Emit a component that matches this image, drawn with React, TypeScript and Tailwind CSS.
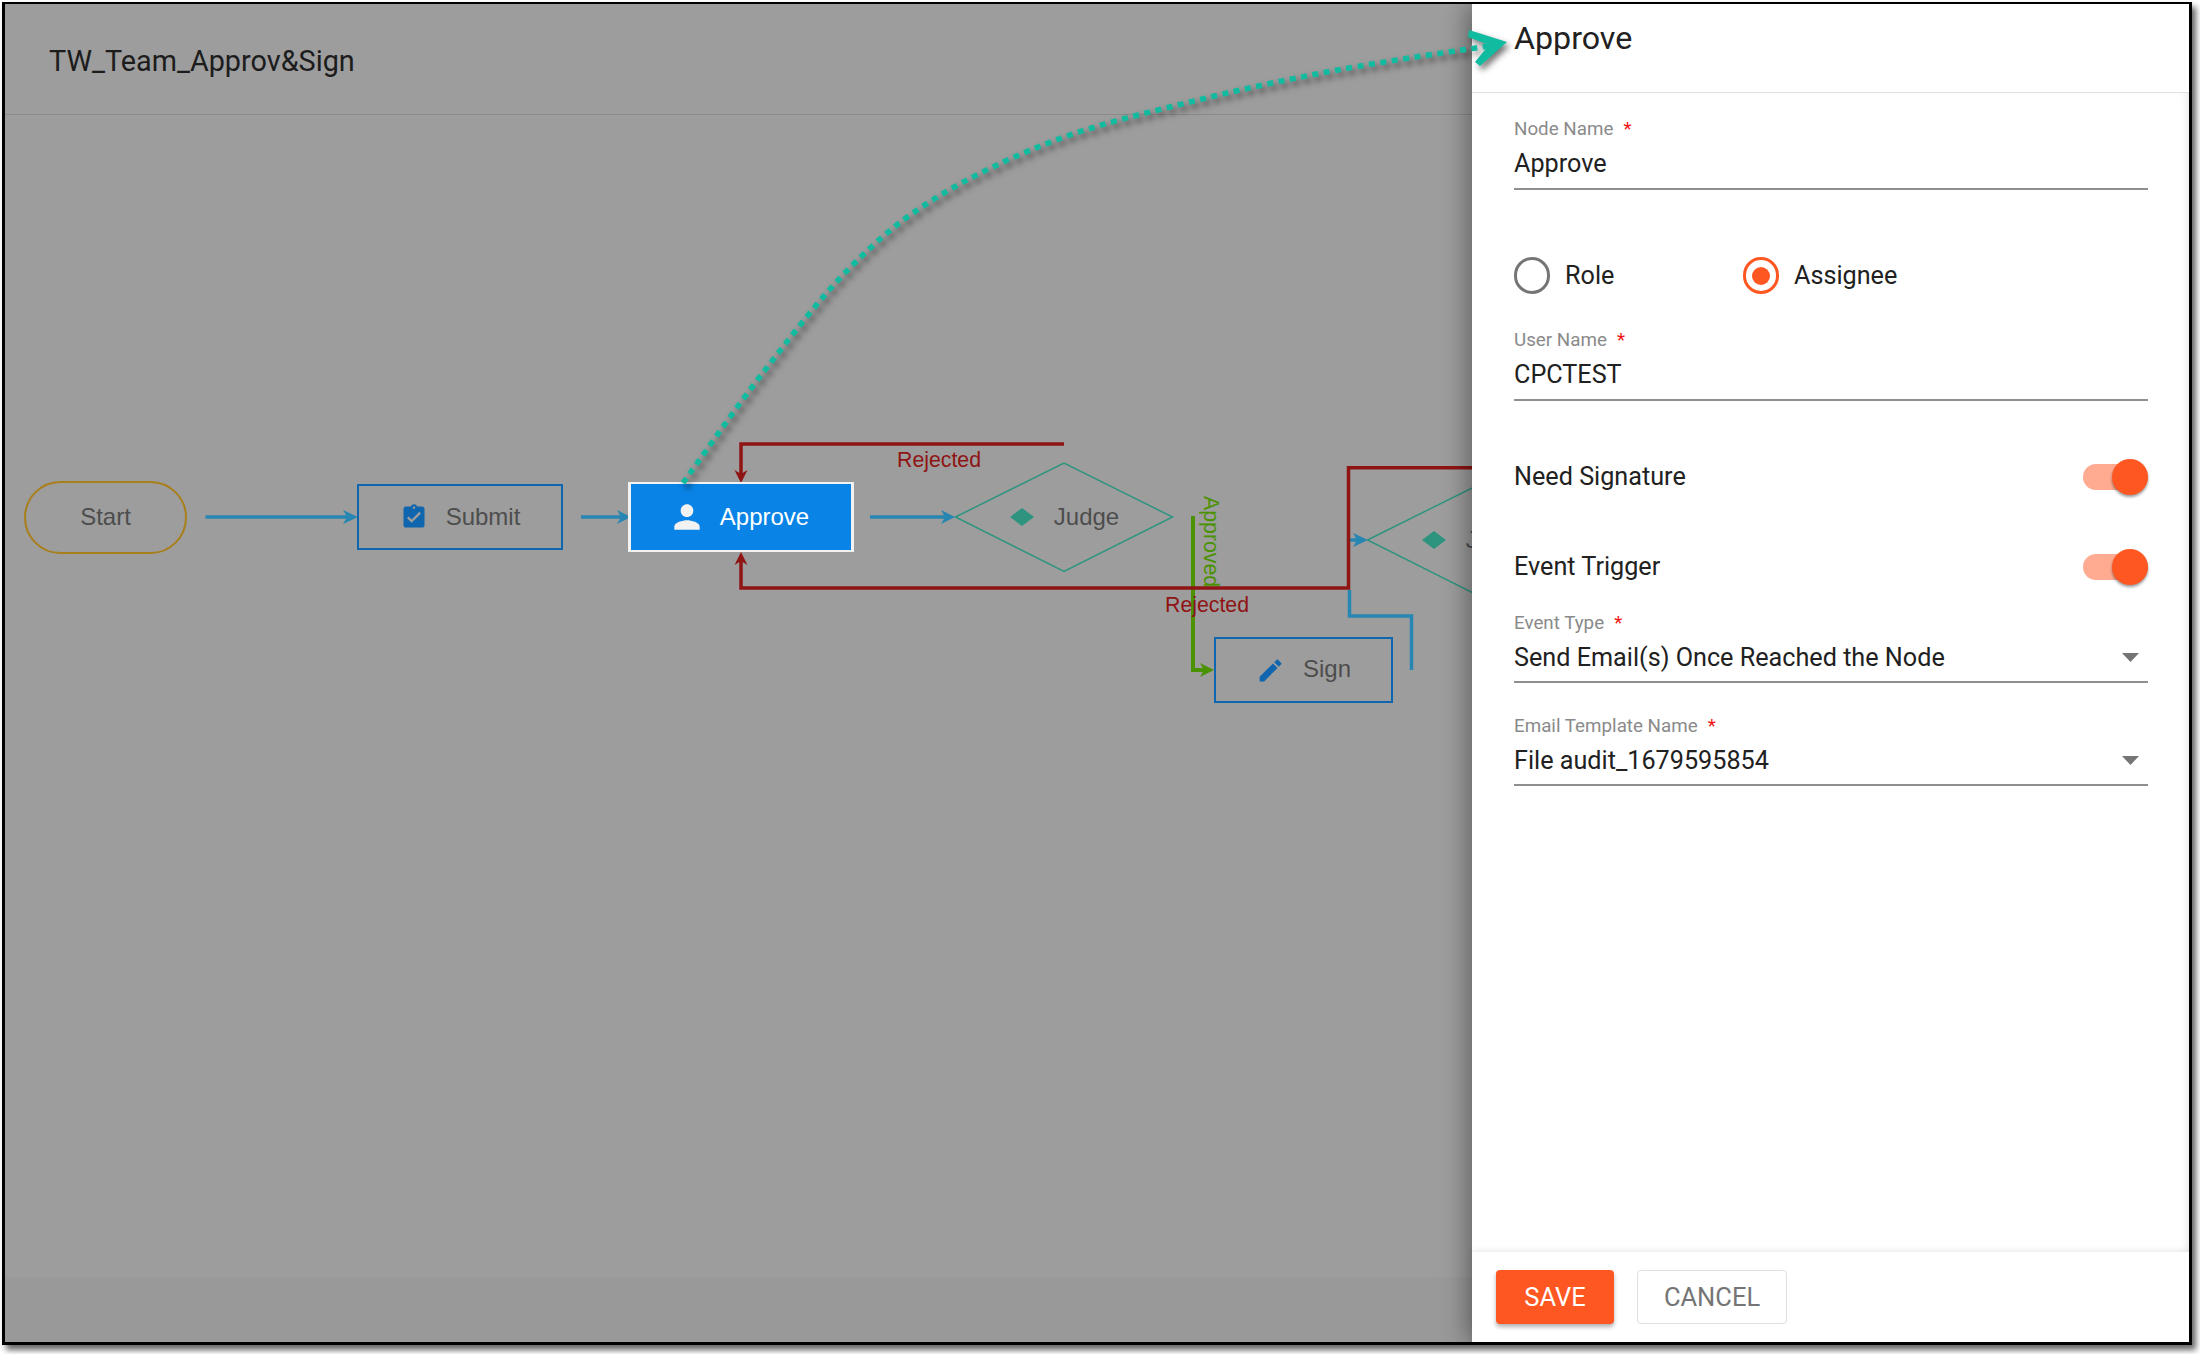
const points: [number, number][] = [
  [683, 483], [763.5, 372], [849.6, 268], [935.7, 198], [1056, 140],
  [1194, 101], [1337.6, 70], [1495, 45],
];

// catmull-rom through the traced points
const curvePath = () => {
  let d = `M${points[0][0]} ${points[0][1]}`;
  for (let i = 0; i < points.length - 1; i++) {
    const p0 = points[Math.max(i - 1, 0)];
    const p1 = points[i];
    const p2 = points[i + 1];
    const p3 = points[Math.min(i + 2, points.length - 1)];
    const c1x = p1[0] + (p2[0] - p0[0]) / 6;
    const c1y = p1[1] + (p2[1] - p0[1]) / 6;
    const c2x = p2[0] - (p3[0] - p1[0]) / 6;
    const c2y = p2[1] - (p3[1] - p1[1]) / 6;
    d += ` C${c1x} ${c1y} ${c2x} ${c2y} ${p2[0]} ${p2[1]}`;
  }
  return d;
};

const BLUE = '#2786b2';
const RED = '#8f1414';
const GREEN = '#4a9200';

const Edges = () => (
  <svg className="absolute left-0 top-0 w-[2184px] h-[1338px]" viewBox="5 4 2184 1338" fill="none">
    <g stroke={BLUE} strokeWidth="3.5">
      <path d="M205.5 517H350" />
      <path d="M581 517H624" />
      <path d="M870 517H948" />
      <path d="M1349 540H1362" />
      <path d="M1349.5 590V616H1411.5V670" />
    </g>
    <g fill={BLUE}>
      <path d="M358 517L343 510L347 517L343 524Z" />
      <path d="M631 517L617 510L621 517L617 524Z" />
      <path d="M955 517L941 510L945 517L941 524Z" />
      <path d="M1368 540L1353 533L1357 540L1353 547Z" />
    </g>
    <path d="M1193 516V670H1206" stroke={GREEN} strokeWidth="4" />
    <path d="M1214 670L1200 663L1204 670L1200 677Z" fill={GREEN} />
    <g stroke={RED} strokeWidth="3.5">
      <path d="M1064 444H741V474" />
      <path d="M741 560V588H1348.5V467.7H1480" />
    </g>
    <g fill={RED}>
      <path d="M741 483L734.5 470L741 474L747.5 470Z" />
      <path d="M741 552L734.5 565L741 561L747.5 565Z" />
    </g>
    <g stroke="#2e9480" strokeWidth="1.5">
      <path d="M955.5 517L1064 463L1172.5 517L1064 571.5Z" />
      <path d="M1367.5 540L1476 486L1584.5 540L1476 594.5Z" />
    </g>
  </svg>
);

const DiamondIcon = () => (
  <svg className="w-[24px] h-[18px]" viewBox="0 0 24 18">
    <path d="M12 0L24 9L12 18L0 9Z" fill="#2e9480" />
  </svg>
);

const Judge = ({ className }: { className: string }) => (
  <div className={`absolute w-[217px] h-[108px] pl-[2px] flex items-center justify-center gap-[20px] text-[24px] text-[#4d4d4d] ${className}`}>
    <DiamondIcon />
    <span>Judge</span>
  </div>
);

const Diagram = () => (
  <div className="absolute inset-0 font-['Liberation_Sans',sans-serif]">
    <Edges />

    <div className="absolute left-[19px] top-[477px] w-[163px] h-[73px] pb-[2px] rounded-full border-2 border-[#a87f1a] flex items-center justify-center text-[24px] text-[#4d4d4d]">
      Start
    </div>

    <div className="absolute left-[352px] top-[480px] w-[206px] h-[66px] pb-[1px] border-2 border-[#0f66ae] flex items-center justify-center gap-[18px] text-[24px] text-[#4d4d4d]">
      <svg className="w-[28px] h-[28px]" viewBox="0 0 24 24" fill="#0f66ae">
        <path d="M19 3h-4.18C14.4 1.84 13.3 1 12 1c-1.3 0-2.4.84-2.82 2H5c-1.1 0-2 .9-2 2v14c0 1.1.9 2 2 2h14c1.1 0 2-.9 2-2V5c0-1.1-.9-2-2-2zm-7 0c.55 0 1 .45 1 1s-.45 1-1 1-1-.45-1-1 .45-1 1-1zm-2 14l-4-4 1.41-1.41L10 14.17l6.59-6.59L18 9l-8 8z" />
      </svg>
      <span>Submit</span>
    </div>

    <div className="absolute left-[623px] top-[478px] w-[226px] h-[70px] pr-[5px] pb-[1px] border-x-[3px] border-y-2 border-[#f2f2f2] bg-[#0984e6] flex items-center justify-center gap-[14px] text-[24px] text-white">
      <svg className="w-[38px] h-[38px]" viewBox="0 0 24 24" fill="#f2f2f2">
        <path d="M12 12c2.21 0 4-1.79 4-4s-1.79-4-4-4-4 1.79-4 4 1.79 4 4 4zm0 2c-2.67 0-8 1.34-8 4v2h16v-2c0-2.66-5.33-4-8-4z" />
      </svg>
      <span>Approve</span>
    </div>

    <Judge className="left-[950px] top-[459px]" />
    <Judge className="left-[1362px] top-[482px]" />

    <div className="absolute left-[1209px] top-[633px] w-[179px] h-[66px] pb-[2px] border-2 border-[#0f66ae] flex items-center justify-center gap-[18px] text-[24px] text-[#4d4d4d]">
      <svg className="w-[29px] h-[29px] mt-[2px]" viewBox="0 0 24 24" fill="#0f66ae">
        <path d="M3 17.25V21h3.75L17.81 9.94l-3.75-3.75L3 17.25zM20.71 7.04c.39-.39.39-1.02 0-1.41l-2.34-2.34c-.39-.39-1.02-.39-1.41 0l-1.83 1.83 3.75 3.75 1.83-1.83z" />
      </svg>
      <span>Sign</span>
    </div>

    <span className="absolute left-[892px] top-[444px] text-[21.3px] leading-[24px] text-[#8f1414]">Rejected</span>
    <span className="absolute left-[1160px] top-[589px] text-[21.3px] leading-[24px] text-[#8f1414]">Rejected</span>
    <span className="absolute left-[1194px] top-[492px] text-[21.3px] leading-[24px] text-[#4a9200] rotate-90 origin-top-left translate-x-[24px]">Approved</span>
  </div>
);

const Field = ({ label, value, select }: { label: string; value: string; select?: boolean }) => (
  <div>
    <div className="h-[20px] pt-[2px] flex items-center text-[18.8px] text-[#8a8a8a]">
      {label}
      <span className="ml-[10px] text-[#f01414]">*</span>
    </div>
    <div className={`mt-[6px] pb-[4px] border-b-2 border-[#8f8f8f] flex items-center justify-between text-[25.2px] text-[#212121] ${select ? 'h-[45px]' : 'h-[46px]'}`}>
      <span>{value}</span>
      {select && (
        <svg className="w-[17px] h-[9px] mr-[9px]" viewBox="0 0 17 9">
          <path d="M0 0H17L8.5 9Z" fill="#757575" />
        </svg>
      )}
    </div>
  </div>
);

const Radio = ({ label, checked, className }: { label: string; checked?: boolean; className?: string }) => (
  <div className={`flex items-center gap-[15px] text-[25.2px] text-[#212121] ${className ?? ''}`}>
    <div className={`w-[36px] h-[37px] rounded-full border-[3px] flex items-center justify-center ${checked ? 'border-[#ff5722]' : 'border-[#757575]'}`}>
      {checked && <div className="w-[18px] h-[18px] rounded-full bg-[#ff5722]" />}
    </div>
    <span>{label}</span>
  </div>
);

const Toggle = ({ label, className }: { label: string; className?: string }) => (
  <div className={`h-[36px] flex items-center justify-between text-[25.2px] text-[#212121] ${className ?? ''}`}>
    <span>{label}</span>
    <div className="relative w-[65px] h-[26px] rounded-full bg-[#ffab91]">
      <div className="absolute right-0 top-[-5px] w-[36px] h-[36px] rounded-full bg-[#ff5722] shadow-[0_2px_3px_rgba(0,0,0,0.4)]" />
    </div>
  </div>
);

const Panel = () => (
  <aside className="relative z-10 w-[717px] shrink-0 flex flex-col bg-white shadow-[-6px_0_22px_rgba(0,0,0,0.35)] font-['Roboto',sans-serif]">
    <header className="h-[89px] border-b border-[#e0e0e0] pl-[42px] pt-[13px] text-[32.2px] leading-[42px] text-[#212121]">
      Approve
    </header>
    <div className="flex-1 pl-[42px] pr-[41px] pt-[25px] shadow-[inset_-8px_0_8px_-6px_rgba(0,0,0,0.1)]">
      <Field label="Node Name" value="Approve" />
      <div className="mt-[67px] h-[38px] flex items-center">
        <Radio label="Role" className="w-[229px]" />
        <Radio label="Assignee" checked />
      </div>
      <div className="mt-[34px]">
        <Field label="User Name" value="CPCTEST" />
      </div>
      <Toggle label="Need Signature" className="mt-[58px]" />
      <Toggle label="Event Trigger" className="mt-[54px]" />
      <div className="mt-[27px]">
        <Field label="Event Type" value="Send Email(s) Once Reached the Node" select />
      </div>
      <div className="mt-[32px]">
        <Field label="Email Template Name" value="File audit_1679595854" select />
      </div>
    </div>
    <footer className="h-[90px] pl-[24px] pt-[18px] flex items-start gap-[23px] bg-white shadow-[0_-2px_6px_rgba(0,0,0,0.08)]">
      <button className="w-[118px] h-[54px] rounded bg-[#ff5722] text-white text-[25.5px] shadow-[0_3px_4px_rgba(0,0,0,0.3)]">SAVE</button>
      <button className="w-[150px] h-[54px] rounded border border-[#e0e0e0] text-[#757575] text-[25.5px]">CANCEL</button>
    </footer>
  </aside>
);

export default function App() {
  return (
    <div className="w-[2200px] h-[1354px] bg-white pl-[2px] pt-[2px]">
      <div className="relative w-[2190px] h-[1343px] border-l-[3px] border-r-[3px] border-t-2 border-b-[3px] border-black shadow-[4px_5px_6px_rgba(0,0,0,0.6)] flex overflow-hidden bg-[#9d9d9d]">
        <main className="relative flex-1 flex flex-col min-w-0">
          <div className="h-[111px] border-b border-[#8a8a8a] pl-[44px] pt-[39px] font-['Roboto',sans-serif] text-[28.8px] leading-[36px] text-[#1c1c1c]">
            TW_Team_Approv&amp;Sign
          </div>
          <div className="flex-1" />
          <div className="h-[65px] bg-[#999999]" />
          <Diagram />
        </main>
        <Panel />
        <svg className="absolute left-0 top-0 z-20 w-[2184px] h-[1338px] pointer-events-none drop-shadow-[3px_4px_3px_rgba(0,0,0,0.55)]" viewBox="5 4 2184 1338" fill="none">
          <path d={curvePath()} stroke="#10bba0" strokeWidth="5.5" strokeDasharray="6 5.5" />
          <path d="M1469 30L1507 42L1480 66L1475 62L1489 45L1468 37Z" fill="#10bba0" />
        </svg>
      </div>
    </div>
  );
}
